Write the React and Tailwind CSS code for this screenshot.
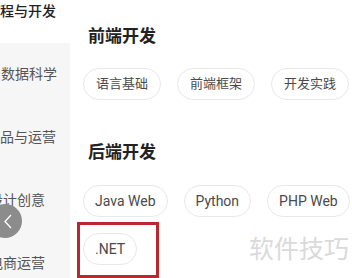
import React from 'react';

const menu = [
  { label: '编程与开发', offset: 'ml-[-14px]', active: true },
  { label: '数据科学', offset: 'ml-[1px]' },
  { label: '产品与运营', offset: 'ml-[-14px]' },
  { label: '设计创意', offset: 'ml-[-11px]' },
  { label: '电商运营', offset: 'ml-[-11px]' },
];

const groups = [
  { title: '前端开发', tags: ['语言基础', '前端框架', '开发实践'], cjk: true, gap: 'mt-[20px]' },
  { title: '后端开发', tags: ['Java Web', 'Python', 'PHP Web', '.NET'], cjk: false, gap: 'mt-[21px]' },
];

function Tag({ text, cjk }) {
  return (
    <span
      className={`h-8 flex items-center rounded-full border border-[#e8e8e8] bg-white text-[#4a4a4a] ${
        cjk ? 'px-3 text-[13px]' : 'px-[11px] text-[14px]'
      }`}
    >
      {text}
    </span>
  );
}

export default function App() {
  return (
    <div className="relative flex h-[278px] w-[352px] overflow-hidden bg-white font-['Roboto','Noto_Sans_CJK_SC',sans-serif]">
      {/* menu de gauche */}
      <div className="w-[70px] shrink-0 overflow-hidden bg-[#f6f6f6]">
        <div className="mt-[-20px]">
          {menu.map((item) => (
            <div
              key={item.label}
              className={`h-[63px] flex items-center whitespace-nowrap text-[14px] ${
                item.active ? 'bg-white text-[#222] font-medium' : 'text-[#555]'
              }`}
            >
              <span className={item.offset}>{item.label}</span>
            </div>
          ))}
        </div>
      </div>

      {/* contenu */}
      <div className="flex-1 min-w-0 pl-[13px] pt-[24px]">
        {groups.map((g, i) => (
          <div key={g.title} className={i > 0 ? 'mt-[40px]' : ''}>
            <h2 className="ml-[5px] h-6 leading-6 text-[17px] font-bold text-[#222]">{g.title}</h2>
            <div className={`${g.gap} w-[290px] flex flex-wrap gap-4`}>
              {g.tags.map((t) => (
                <Tag key={t} text={t} cjk={g.cjk} />
              ))}
            </div>
          </div>
        ))}
      </div>

      {/* bouton retour */}
      <div className="absolute left-[-12px] top-[204px] w-[34px] h-[34px] rounded-full bg-[#8c8c8c] flex items-center justify-end pr-[10px]">
        <svg width="8" height="15" viewBox="0 0 8 15" fill="none">
          <path d="M7 1L1 7.5L7 14" stroke="white" strokeWidth="1.3" />
        </svg>
      </div>

      {/* cadre rouge */}
      <div className="absolute left-[77px] top-[222px] w-[82px] h-[56px] border-[3px] border-[#b8282e]" />

      {/* filigrane */}
      <div className="absolute left-[249px] top-[235px] text-[25px] leading-[30px] text-[#dadada]">软件技巧</div>
    </div>
  );
}
